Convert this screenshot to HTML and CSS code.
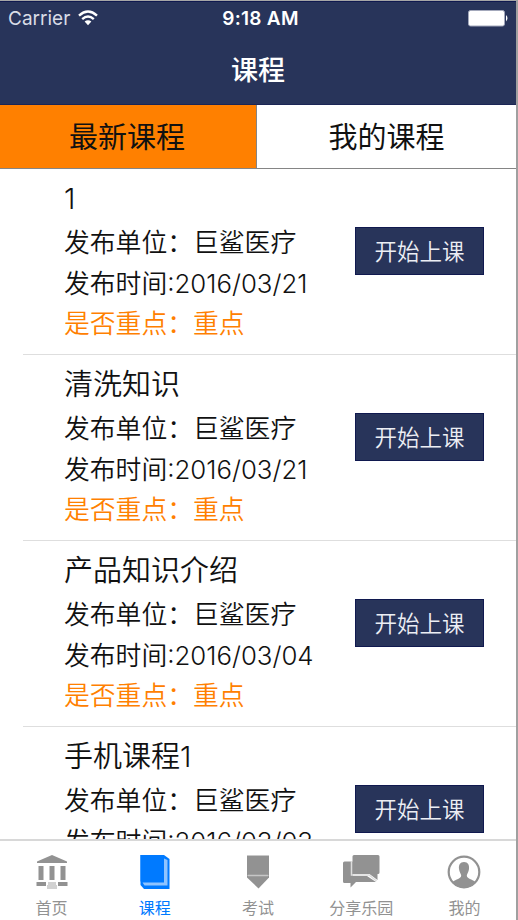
FILE: index.html
```html
<!DOCTYPE html>
<html lang="zh-CN">
<head>
    <meta charset="UTF-8">
    <meta name="viewport" content="width=device-width, initial-scale=1.0">
    <title>课程</title>
    <link rel="stylesheet" href="styles.css">
</head>
<body>
    <div class="screen">
        <header>
            <div class="status-bar">
                <div class="carrier">
                    <span>Carrier</span>
                    <svg width="20" height="16" viewBox="0 0 20 16" fill="none" stroke="#fff" stroke-width="2.4">
                        <path d="M1 5.6Q10-2.4 19 5.6"/>
                        <path d="M4.2 9.2Q10 4 15.8 9.2"/>
                        <path d="M10 15.2L6.6 11.6Q10 8.8 13.4 11.6Z" fill="#fff" stroke="none"/>
                    </svg>
                </div>
                <div class="time">9:18 AM</div>
                <svg class="battery" width="41" height="17" viewBox="0 0 41 17">
                    <rect x="0.5" y="0.5" width="36" height="15.5" rx="2" fill="#fff" stroke="#a3a8bb"/>
                    <path d="M38 5Q41 8.2 38 11.5Z" fill="#fff"/>
                </svg>
            </div>
            <h1>课程</h1>
        </header>

        <nav class="tabs">
            <div class="tab active">最新课程</div>
            <div class="tab">我的课程</div>
        </nav>

        <main class="course-list">
            <div class="course">
                <div class="info">
                    <h2>1</h2>
                    <p>发布单位：巨鲨医疗</p>
                    <p>发布时间:2016/03/21</p>
                    <p class="important">是否重点：重点</p>
                </div>
                <button class="start">开始上课</button>
            </div>
            <div class="course">
                <div class="info">
                    <h2>清洗知识</h2>
                    <p>发布单位：巨鲨医疗</p>
                    <p>发布时间:2016/03/21</p>
                    <p class="important">是否重点：重点</p>
                </div>
                <button class="start">开始上课</button>
            </div>
            <div class="course">
                <div class="info">
                    <h2>产品知识介绍</h2>
                    <p>发布单位：巨鲨医疗</p>
                    <p>发布时间:2016/03/04</p>
                    <p class="important">是否重点：重点</p>
                </div>
                <button class="start">开始上课</button>
            </div>
            <div class="course">
                <div class="info">
                    <h2>手机课程1</h2>
                    <p>发布单位：巨鲨医疗</p>
                    <p>发布时间:2016/03/03</p>
                </div>
                <button class="start">开始上课</button>
            </div>
        </main>

        <footer class="bottom-bar">
            <div class="item">
                <svg width="36" height="36" viewBox="0 0 36 36" fill="#929292">
                    <path d="M18 1L33 7.5V9H3V7.5Z"/>
                    <path d="M4.5 12h5v14h-5zM15.5 12h5v14h-5zM26.5 12h5v14h-5z"/>
                    <path d="M2.5 28h9.5v4H2.5zM24 28h9.5v4H24z"/>
                    <path d="M14 28h8v3h1v4H13v-4h1z" fill="#d2d2d2"/>
                </svg>
                <span>首页</span>
            </div>
            <div class="item active">
                <svg width="36" height="36" viewBox="0 0 36 36" fill="#007aff">
                    <path d="M3.5 1H27L32.5 5V35H7L3.5 31Z"/>
                    <path d="M27 4.5L30.5 6V31.5H7.5L5.5 28.5H27Z" fill="#8fc4ff"/>
                    <path d="M3.5 1H26V27.5H3.5Z"/>
                </svg>
                <span>课程</span>
            </div>
            <div class="item">
                <svg width="36" height="36" viewBox="0 0 36 36" fill="#929292">
                    <path d="M7 1.5H29V21.5H7Z"/>
                    <path d="M7 21.5H29V23.5L18.5 34.5L7 23.5Z"/>
                    <path d="M8 21.5H28" stroke="#c6c6c6" stroke-width="1.5"/>
                </svg>
                <span>考试</span>
            </div>
            <div class="item">
                <svg width="40" height="36" viewBox="0 0 40 36" fill="#929292">
                    <path d="M3.5 7.5H12V22H26L35 28H15L9.5 33.5V29H3.5Q2 29 2 27.5V9Q2 7.5 3.5 7.5Z"/>
                    <path d="M13 1H37Q38.5 1 38.5 2.5V18.5Q38.5 20 37 20H36.5V26L28.5 20H11.5V2.5Q11.5 1 13 1Z"/>
                    <path d="M10.5 7V21H28L35.5 27" fill="none" stroke="#ddd" stroke-width="1.5"/>
                </svg>
                <span>分享乐园</span>
            </div>
            <div class="item">
                <svg width="36" height="36" viewBox="0 0 36 36" fill="#929292">
                    <circle cx="18" cy="18" r="15.3" fill="none" stroke="#929292" stroke-width="2.2"/>
                    <path d="M18 8C22 8 23.5 11 23 15C22.7 18 21 20 20.8 21.5C21 25 26 25 29.5 28Q25 34 18 34Q11 34 6.5 28C10 25 15 25 15.2 21.5C15 20 13.3 18 13 15C12.5 11 14 8 18 8Z"/>
                </svg>
                <span>我的</span>
            </div>
        </footer>
    </div>
</body>
</html>
```

FILE: styles.css
```css
:root {
    --primary-color: #28345a;
    --accent-color: #ff8000;
    --blue-color: #007aff;
    --gray-color: #929292;
}

* {
    margin: 0;
    padding: 0;
    box-sizing: border-box;
}

body {
    font-family: Inter, "Noto Sans CJK SC", sans-serif;
    background-color: #fff;
    color: #111;
}

.screen {
    display: flex;
    flex-direction: column;
    width: 518px;
    height: 920px;
    overflow: hidden;
    border-top: 1px solid #a6a6a6;
    border-right: 2px solid #a0a0a0;
}

header {
    height: 104px;
    background-color: var(--primary-color);
    border-top: 1px solid #10194f;
    border-bottom: 1px solid #1b2555;
    color: #fff;
}

.status-bar {
    display: grid;
    grid-template-columns: 1fr auto 1fr;
    align-items: center;
    height: 32px;
    padding: 0 7px 0 8px;
    font-size: 19px;
}

.carrier {
    display: flex;
    align-items: center;
    gap: 8px;
    color: #d9dce6;
}

.time {
    padding-left: 4px;
    font-weight: 600;
    letter-spacing: 0.3px;
}

.battery {
    justify-self: end;
}

h1 {
    font-size: 27px;
    font-weight: 500;
    line-height: 74px;
    text-align: center;
}

.tabs {
    display: flex;
    height: 64px;
    border-bottom: 1px solid #858585;
}

.tab {
    flex: 1;
    font-size: 29px;
    line-height: 66px;
    text-align: center;
}

.tab.active {
    flex: 0 0 257px;
    padding-right: 2px;
    background-color: var(--accent-color);
    border-right: 1px solid #858585;
}

.course-list {
    flex: 1;
    overflow: hidden;
}

.course {
    display: flex;
    justify-content: space-between;
    height: 186px;
    margin-left: 23px;
    padding: 8px 32px 0 41px;
    border-bottom: 1px solid #dedede;
}

h2 {
    margin-bottom: 2px;
    font-size: 29px;
    font-weight: 350;
    line-height: 44px;
}

.info p {
    font-size: 25.8px;
    font-weight: 350;
    line-height: 40.5px;
    white-space: nowrap;
}

.info .important {
    color: var(--accent-color);
}

.start {
    width: 129px;
    height: 48px;
    margin-top: 50px;
    padding-bottom: 2px;
    background-color: var(--primary-color);
    border: 1px solid #10194f;
    color: #eceef4;
    font-family: inherit;
    font-size: 22.5px;
    font-weight: 350;
}

.bottom-bar {
    display: flex;
    height: 81px;
    border-top: 2px solid #d8d8d8;
    background-color: #fff;
}

.item {
    flex: 1;
    display: flex;
    flex-direction: column;
    align-items: center;
    gap: 6px;
    padding-top: 13px;
    color: var(--gray-color);
    font-size: 16px;
    line-height: 24px;
}

.item svg {
    flex-shrink: 0;
}

.item.active {
    color: var(--blue-color);
}
```
